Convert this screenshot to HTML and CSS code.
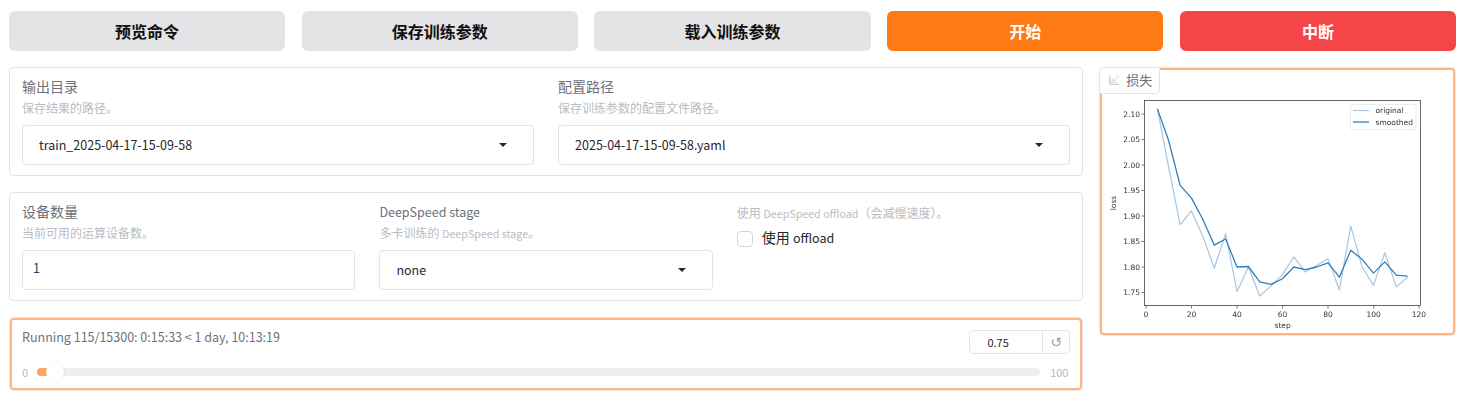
FILE: index.html
```html
<!DOCTYPE html>
<html lang="zh">
<head>
<meta charset="utf-8">
<title>训练</title>
<link rel="stylesheet" href="styles.css">
</head>
<body>
<div class="actions">
  <button class="btn">预览命令</button>
  <button class="btn">保存训练参数</button>
  <button class="btn">载入训练参数</button>
  <button class="btn btn-primary">开始</button>
  <button class="btn btn-stop">中断</button>
</div>
<div class="main">
  <div class="left">
    <section class="panel cols-2">
      <div class="field">
        <div class="label">输出目录</div>
        <div class="info">保存结果的路径。</div>
        <div class="control"><span class="lat">train_2025-04-17-15-09-58</span><i class="arrow"></i></div>
      </div>
      <div class="field">
        <div class="label">配置路径</div>
        <div class="info">保存训练参数的配置文件路径。</div>
        <div class="control"><span class="lat">2025-04-17-15-09-58.yaml</span><i class="arrow"></i></div>
      </div>
    </section>
    <section class="panel cols-3">
      <div class="field">
        <div class="label">设备数量</div>
        <div class="info">当前可用的运算设备数。</div>
        <div class="control control-num"><span class="lat">1</span></div>
      </div>
      <div class="field">
        <div class="label"><span class="lat">DeepSpeed stage</span></div>
        <div class="info">多卡训练的 <span class="lat-sm">DeepSpeed stage</span>。</div>
        <div class="control"><span class="lat">none</span><i class="arrow"></i></div>
      </div>
      <div class="field">
        <div class="info info-top">使用 <span class="lat-sm">DeepSpeed offload</span>（会减慢速度）。</div>
        <label class="check"><span class="box"></span><span class="check-text">使用 <span class="lat">offload</span></span></label>
      </div>
    </section>
    <section class="progress">
      <div class="progress-top">
        <div class="running">Running 115/15300: 0:15:33 &lt; 1 day, 10:13:19</div>
        <div class="number"><span class="num-val">0.75</span><span class="num-reset">↺</span></div>
      </div>
      <div class="slider">
        <span class="min">0</span>
        <div class="track"><div class="fill"></div><div class="thumb"></div></div>
        <span class="max">100</span>
      </div>
    </section>
  </div>
  <aside class="chart-card">
    <div class="chart-tab">
      <svg class="tab-icon" viewBox="0 0 12 12" width="12" height="12" aria-hidden="true">
        <path d="M1.500 1v9.500H11L1.500 1z" fill="#eeeef0"/>
        <path d="M1.500 1v9.500H11" fill="none" stroke="#cfcfd3" stroke-width="1"/>
        <path d="M3 8.500L5.500 5.500l1.500 1L10.500 2" fill="none" stroke="#b4b4ba" stroke-width="1" stroke-dasharray="1.500 1"/>
      </svg>
      <span>损失</span>
    </div>
    <svg class="plot" viewBox="1102 70 351 263" width="351" height="263" role="img">
      <rect x="1144.500" y="100.500" width="276" height="205" fill="#fff" stroke="#444" stroke-width="0.8"/>
      <g stroke="#444" stroke-width="0.7">
        <path d="M1146 305.500v3M1191.500 305.500v3M1237 305.500v3M1282.600 305.500v3M1328 305.500v3M1373.700 305.500v3M1419 305.500v3"/>
        <path d="M1144.500 114h-3M1144.500 139.500h-3M1144.500 165h-3M1144.500 190.500h-3M1144.500 216h-3M1144.500 241.500h-3M1144.500 267h-3M1144.500 292.500h-3"/>
      </g>
      <g transform="translate(1146,1185) scale(2.275,-510)" fill="none" stroke-linejoin="round">
        <polyline class="line-orig" points="5,2.11 10,1.995 15,1.883 20,1.91 25,1.86 30,1.798 35,1.865 40,1.752 45,1.80 50,1.743 55,1.763 60,1.785 65,1.82 70,1.79 75,1.803 80,1.816 85,1.755 90,1.88 95,1.80 100,1.764 105,1.828 110,1.761 115,1.78"/>
        <polyline class="line-smooth" points="5,2.11 10,2.047 15,1.96 20,1.935 25,1.893 30,1.843 35,1.855 40,1.80 45,1.801 50,1.771 55,1.766 60,1.777 65,1.80 70,1.795 75,1.80 80,1.808 85,1.78 90,1.833 95,1.815 100,1.788 105,1.81 110,1.784 115,1.782"/>
      </g>
      <g class="ticks ticks-y">
        <text x="1140" y="116.700">2.10</text>
        <text x="1140" y="142.200">2.05</text>
        <text x="1140" y="167.700">2.00</text>
        <text x="1140" y="193.200">1.95</text>
        <text x="1140" y="218.700">1.90</text>
        <text x="1140" y="244.200">1.85</text>
        <text x="1140" y="269.700">1.80</text>
        <text x="1140" y="295.200">1.75</text>
      </g>
      <g class="ticks ticks-x">
        <text x="1146" y="317">0</text>
        <text x="1191.500" y="317">20</text>
        <text x="1237" y="317">40</text>
        <text x="1282.600" y="317">60</text>
        <text x="1328" y="317">80</text>
        <text x="1373.700" y="317">100</text>
        <text x="1419" y="317">120</text>
        <text x="1282.600" y="328">step</text>
      </g>
      <text class="ticks ticks-x" transform="translate(1116,203) rotate(-90)">loss</text>
      <rect x="1350.500" y="104.500" width="65.500" height="25" rx="1.500" fill="#fff" stroke="#e4e4e4" stroke-width="0.7"/>
      <path class="line-orig" d="M1353 110.500h16"/>
      <path class="line-smooth" d="M1353 122h16"/>
      <text class="ticks" x="1375.500" y="113">original</text>
      <text class="ticks" x="1375.500" y="124.500">smoothed</text>
    </svg>
  </aside>
</div>
</body>
</html>
```
FILE: styles.css
```css
* { box-sizing: border-box; }
html, body { margin: 0; height: 100%; background: #fff; }
body {
  padding: 11px 11px 0 9px;
  font-family: "Noto Sans CJK SC", "Noto Sans", sans-serif;
  color: #27272a;
  overflow: hidden;
}
.lat { font-size: 12.500px; }
.lat-sm { font-size: 10.700px; }
.actions {
  display: grid;
  grid-template-columns: repeat(5, 1fr);
  gap: 16.500px;
}
.btn {
  height: 40px;
  border: 0;
  border-radius: 6px;
  background: #e4e4e7;
  color: #111;
  font: 700 16px/1 "Noto Sans CJK SC", sans-serif;
  padding: 0;
}
.btn-primary { background: #fd7a14; color: #fff; }
.btn-stop { background: #f44646; color: #fff; }
.main {
  display: grid;
  grid-template-columns: 3.010fr 1fr;
  gap: 16px;
  margin-top: 16px;
  align-items: start;
}
.left { display: flex; flex-direction: column; gap: 16px; min-width: 0; }
.panel {
  display: grid;
  gap: 24px;
  height: 109px;
  padding: 9px 12px;
  border: 1px solid #e4e4e7;
  border-radius: 4px;
}
.cols-2 { grid-template-columns: repeat(2, 1fr); }
.cols-3 { grid-template-columns: repeat(3, 1fr); }
.field { display: flex; flex-direction: column; min-width: 0; }
.label { font-size: 14px; line-height: 18px; height: 18px; color: #6b7280; }
.info { font-size: 12px; line-height: 20px; height: 20px; margin-top: 3px; color: #b8bcc2; }
.info-top { margin-top: 1px; }
.control {
  display: flex;
  align-items: center;
  justify-content: space-between;
  height: 40px;
  margin-top: 7px;
  padding: 0 26px 2px 16px;
  border: 1px solid #e4e4e7;
  border-radius: 4px;
  font-size: 14px;
  color: #27272a;
}
.control-num { padding: 0 10px 5px; color: #1f3a6e; }
.arrow {
  width: 0;
  height: 0;
  margin-top: 2px;
  border-left: 4.500px solid transparent;
  border-right: 4.500px solid transparent;
  border-top: 4.500px solid #27272a;
}
.check {
  display: flex;
  align-items: flex-start;
  gap: 9px;
  margin-top: 5px;
  font-size: 14px;
  line-height: 20px;
  color: #27272a;
}
.check-text { margin-top: -1px; }
.box {
  width: 16px;
  height: 16px;
  margin-top: 3px;
  border: 1px solid #d4d4d8;
  border-radius: 4px;
  background: #fff;
}
.progress {
  height: 72px;
  margin: 1px 1px 0;
  padding: 10px 10px 0;
  border: 2px solid #ffb482;
  border-radius: 4px;
  box-shadow: 0 0 0 1px #e8e8ea;
}
.progress-top { display: flex; justify-content: space-between; align-items: flex-start; }
.running { margin-top: -3px; font-size: 12.500px; line-height: 20px; color: #6b7280; }
.number {
  display: flex;
  width: 101px;
  height: 24px;
  border: 1px solid #e4e4e7;
  border-radius: 4px;
  font-size: 11px;
  line-height: 22px;
}
.num-val { flex: 1; padding-right: 16px; text-align: center; color: #27272a; }
.num-reset {
  width: 27px;
  text-align: center;
  border-left: 1px solid #e4e4e7;
  color: #9ca3af;
  font-family: "DejaVu Sans", sans-serif;
  font-size: 14px;
}
.slider {
  display: flex;
  align-items: center;
  margin-top: 10px;
  font-size: 11px;
  line-height: 16px;
  color: #b4b8be;
}
.min { width: 15px; }
.max { width: 30px; padding-left: 10px; }
.track {
  position: relative;
  flex: 1;
  height: 8px;
  border-radius: 4px;
  background: #eeeef0;
}
.fill {
  width: 12px;
  height: 8px;
  border-radius: 4px 0 0 4px;
  background: #ffa266;
}
.thumb {
  position: absolute;
  left: 9px;
  top: -5px;
  width: 18px;
  height: 18px;
  border-radius: 50%;
  background: #fff;
  box-shadow: 0 0 3px rgba(0, 0, 0, .08);
}
.chart-card {
  position: relative;
  min-width: 0;
  height: 267px;
  margin: 1px 1px 0;
  border: 2px solid #ffb482;
  border-radius: 4px;
  box-shadow: 0 0 0 1px #e8e8ea;
  background: #fff;
}
.chart-tab {
  position: absolute;
  left: -3px;
  top: -3px;
  display: flex;
  align-items: center;
  gap: 6px;
  height: 27px;
  padding: 0 7px 2px 8px;
  border: 1px solid #e4e4e7;
  border-radius: 4px 0 4px 0;
  background: #fff;
  font-size: 13px;
  color: #6b7280;
}
.plot { display: block; filter: blur(.3px); }
.line-orig, .line-smooth { fill: none; vector-effect: non-scaling-stroke; }
.line-orig { stroke: #a6c6e1; stroke-width: 1.200; }
.line-smooth { stroke: #2f7fbc; stroke-width: 1.300; }
.ticks text, text.ticks { font-family: "DejaVu Sans", sans-serif; font-size: 7.500px; fill: #333; }
.ticks-y text { text-anchor: end; }
.ticks-x text, text.ticks-x { text-anchor: middle; }
```
